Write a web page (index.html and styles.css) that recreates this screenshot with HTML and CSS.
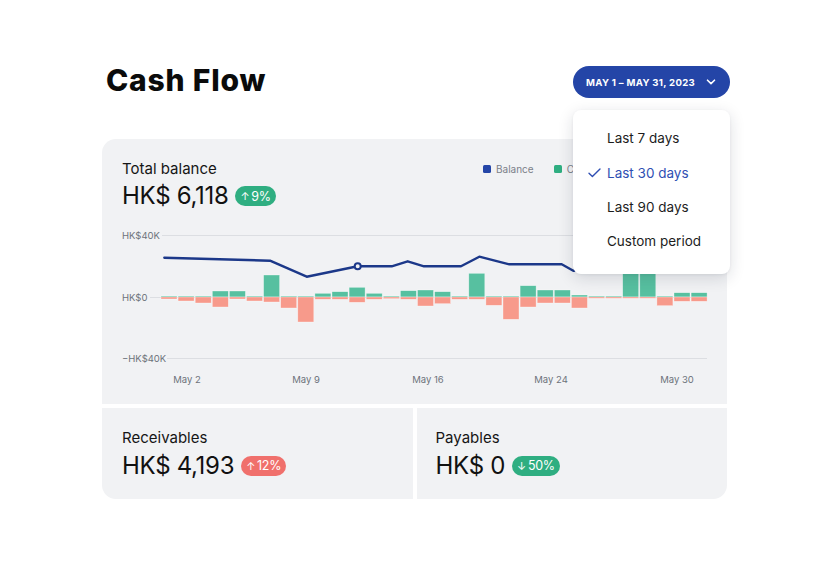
FILE: index.html
```html
<!DOCTYPE html>
<html lang="en">
<head>
<meta charset="utf-8">
<title>Cash Flow</title>
<link rel="stylesheet" href="styles.css">
</head>
<body>
<div class="page">
  <header class="header">
    <h1 class="title">Cash Flow</h1>
    <div class="picker">
      <button class="date-btn">
        <span>MAY 1 – MAY 31, 2023</span>
        <svg class="chev" width="10" height="6" viewBox="0 0 10 6"><path d="M1.5 1.2 5 4.6 8.5 1.2" fill="none" stroke="#fff" stroke-width="1.6" stroke-linecap="round" stroke-linejoin="round"/></svg>
      </button>
      <ul class="menu">
        <li class="item"><span class="check"></span><span>Last 7 days</span></li>
        <li class="item active"><span class="check"><svg width="13" height="10" viewBox="0 0 13 10"><path d="M1 5.2 4.4 8.6 12 1" fill="none" stroke="#2f4fb3" stroke-width="1.4" stroke-linecap="round" stroke-linejoin="round"/></svg></span><span>Last 30 days</span></li>
        <li class="item"><span class="check"></span><span>Last 90 days</span></li>
        <li class="item"><span class="check"></span><span>Custom period</span></li>
      </ul>
    </div>
  </header>

  <section class="card main">
    <div class="card-top">
      <div class="stat">
        <div class="label">Total balance</div>
        <div class="value-row"><span class="value">HK$ 6,118</span><span class="badge green"><span class="arr">↑</span>9%</span></div>
      </div>
      <div class="legend">
        <span class="leg"><i class="sw blue"></i>Balance</span>
        <span class="leg"><i class="sw teal"></i>Cash in</span>
      </div>
    </div>
    <svg class="chart" width="585" height="165" viewBox="0 0 585 165">
      <g class="axis">
        <text x="0" y="13.5">HK$40K</text>
        <text x="0" y="75.5">HK$0</text>
        <text x="0" y="136.5">−HK$40K</text>
      </g>
      <g class="grid">
        <line x1="40" y1="10.5" x2="585" y2="10.5"/>
        <line x1="28" y1="72.5" x2="585" y2="72.5"/>
        <line x1="45" y1="133.5" x2="585" y2="133.5"/>
      </g>
      <g class="in">
        <rect x="39" y="71" width="16" height="1"/>
        <rect x="56.1" y="71" width="16" height="1"/>
        <rect x="73.2" y="71" width="16" height="1"/>
        <rect x="90.3" y="66" width="16" height="6"/>
        <rect x="107.4" y="66" width="16" height="6"/>
        <rect x="124.5" y="71" width="16" height="1"/>
        <rect x="141.6" y="50" width="16" height="22"/>
        <rect x="158.7" y="71" width="16" height="1"/>
        <rect x="175.8" y="71" width="16" height="1"/>
        <rect x="192.9" y="68.3" width="16" height="3.7"/>
        <rect x="210" y="66.7" width="16" height="5.3"/>
        <rect x="227.1" y="62.3" width="16" height="9.7"/>
        <rect x="244.2" y="68.3" width="16" height="3.7"/>
        <rect x="261.3" y="71" width="16" height="1"/>
        <rect x="278.4" y="65.7" width="16" height="6.3"/>
        <rect x="295.5" y="65" width="16" height="7"/>
        <rect x="312.6" y="66.7" width="16" height="5.3"/>
        <rect x="329.7" y="71" width="16" height="1"/>
        <rect x="346.8" y="48.3" width="16" height="23.7"/>
        <rect x="363.9" y="71" width="16" height="1"/>
        <rect x="381" y="71" width="16" height="1"/>
        <rect x="398.1" y="60.7" width="16" height="11.3"/>
        <rect x="415.2" y="65" width="16" height="7"/>
        <rect x="432.3" y="65" width="16" height="7"/>
        <rect x="449.4" y="70" width="16" height="2"/>
        <rect x="466.5" y="71" width="16" height="1"/>
        <rect x="483.6" y="71" width="16" height="1"/>
        <rect x="500.7" y="44" width="16" height="28"/>
        <rect x="517.8" y="44" width="16" height="28"/>
        <rect x="534.9" y="71" width="16" height="1"/>
        <rect x="552" y="67.7" width="16" height="4.3"/>
        <rect x="569.1" y="67.7" width="16" height="4.3"/>
      </g>
      <g class="out">
        <rect x="39" y="72" width="16" height="2"/>
        <rect x="56.1" y="72" width="16" height="4"/>
        <rect x="73.2" y="72" width="16" height="6"/>
        <rect x="90.3" y="72" width="16" height="10"/>
        <rect x="107.4" y="72" width="16" height="2"/>
        <rect x="124.5" y="72" width="16" height="4"/>
        <rect x="141.6" y="72" width="16" height="5"/>
        <rect x="158.7" y="72" width="16" height="11"/>
        <rect x="175.8" y="72" width="16" height="25"/>
        <rect x="192.9" y="72" width="16" height="2.3"/>
        <rect x="210" y="72" width="16" height="2.3"/>
        <rect x="227.1" y="72" width="16" height="5.3"/>
        <rect x="244.2" y="72" width="16" height="2.3"/>
        <rect x="261.3" y="72" width="16" height="1.7"/>
        <rect x="278.4" y="72" width="16" height="2.3"/>
        <rect x="295.5" y="72" width="16" height="9"/>
        <rect x="312.6" y="72" width="16" height="6.7"/>
        <rect x="329.7" y="72" width="16" height="2.3"/>
        <rect x="346.8" y="72" width="16" height="2.3"/>
        <rect x="363.9" y="72" width="16" height="8.3"/>
        <rect x="381" y="72" width="16" height="22.3"/>
        <rect x="398.1" y="72" width="16" height="10"/>
        <rect x="415.2" y="72" width="16" height="6"/>
        <rect x="432.3" y="72" width="16" height="6"/>
        <rect x="449.4" y="72" width="16" height="11"/>
        <rect x="466.5" y="72" width="16" height="1.3"/>
        <rect x="483.6" y="72" width="16" height="1.3"/>
        <rect x="500.7" y="72" width="16" height="1.3"/>
        <rect x="517.8" y="72" width="16" height="1.3"/>
        <rect x="534.9" y="72" width="16" height="8.7"/>
        <rect x="552" y="72" width="16" height="4.3"/>
        <rect x="569.1" y="72" width="16" height="4.3"/>
      </g>
      <polyline class="balance" points="42.3,32.7 148,35.7 184.7,51.7 235.7,41.3 269.7,41.3 285.7,36.3 302,41.3 339,41.3 357.3,31.7 387.3,39.3 439.7,39.3 451.3,45.7 468,44 560,40 577,38"/>
      <circle class="dot" cx="235.7" cy="41.3" r="3"/>
      <g class="xaxis">
        <text x="65" y="157.5">May 2</text>
        <text x="184" y="157.5">May 9</text>
        <text x="306" y="157.5">May 16</text>
        <text x="429" y="157.5">May 24</text>
        <text x="555" y="157.5">May 30</text>
      </g>
    </svg>
  </section>

  <div class="bottom">
    <section class="card small left">
      <div class="label">Receivables</div>
      <div class="value-row"><span class="value">HK$ 4,193</span><span class="badge red"><span class="arr">↑</span>12%</span></div>
    </section>
    <section class="card small right">
      <div class="label">Payables</div>
      <div class="value-row"><span class="value">HK$ 0</span><span class="badge green"><span class="arr">↓</span>50%</span></div>
    </section>
  </div>
</div>
</body>
</html>
```

FILE: styles.css
```css
* { box-sizing: border-box; }
html, body { margin: 0; padding: 0; background: #fff; }
body {
  width: 832px;
  height: 564px;
  overflow: hidden;
  font-family: Inter, "Noto Sans", "Liberation Sans", sans-serif;
  color: #141414;
}
.page {
  width: 625px;
  margin-left: 102px;
  padding-top: 66px;
}
.header {
  display: flex;
  justify-content: space-between;
  align-items: flex-start;
  margin-right: -3px;
  height: 32px;
}
.title {
  margin: 0 0 0 4px;
  font-size: 30px;
  line-height: 28px;
  font-weight: 800;
  letter-spacing: 0.8px;
  color: #0b0b0b;
}
.picker { position: relative; }
.date-btn {
  display: flex;
  align-items: center;
  justify-content: space-between;
  height: 32px;
  width: 157px;
  padding: 0 14px 0 13px;
  border: 0;
  border-radius: 16px;
  background: #2445a7;
  color: #fff;
  font-family: Inter, "Liberation Sans", sans-serif;
  font-size: 9.6px;
  font-weight: 700;
  letter-spacing: 0.3px;
}
.chev { display: block; }
.menu {
  position: absolute;
  top: 44px;
  right: 0;
  width: 157px;
  margin: 0;
  padding: 11px 0 15px;
  list-style: none;
  background: #fff;
  border-radius: 8px;
  box-shadow: 0 4px 16px rgba(20, 30, 50, 0.14), 0 1px 3px rgba(20, 30, 50, 0.06);
  z-index: 5;
}
.item {
  display: flex;
  align-items: center;
  height: 34.4px;
  padding-left: 15px;
  font-size: 13.5px;
  color: #1d1d1d;
}
.item .check {
  width: 14px;
  margin-right: 5px;
  display: flex;
  align-items: center;
}
.item.active { color: #2f4fb3; }

.card { background: #f1f2f4; }
.main {
  margin-top: 41px;
  height: 265px;
  padding: 20px 20px 0;
  border-radius: 14px 14px 0 0;
}
.card-top {
  display: flex;
  justify-content: space-between;
  align-items: flex-start;
}
.label {
  font-size: 15px;
  line-height: 20px;
  color: #161616;
}
.value-row {
  display: flex;
  align-items: center;
  gap: 7px;
  margin-top: 3px;
}
.value {
  font-size: 24px;
  line-height: 28px;
  font-weight: 400;
  letter-spacing: -0.3px;
  color: #111;
}
.badge {
  display: inline-flex;
  align-items: center;
  height: 20px;
  padding: 0 5px 0 5px;
  border-radius: 10px;
  color: #fff;
  font-size: 12.5px;
  letter-spacing: -0.3px;
}
.badge .arr { font-size: 11px; margin-right: 2px; }
.badge.green { background: #2fae81; }
.badge.red { background: #f0706c; }

.legend {
  width: 224px;
  display: flex;
  gap: 20px;
  margin-top: 4px;
}
.leg {
  display: flex;
  align-items: center;
  gap: 5px;
  font-size: 10px;
  color: #7b8089;
}
.sw {
  width: 8px;
  height: 8px;
  border-radius: 1.5px;
}
.sw.blue { background: #2445a7; }
.sw.teal { background: #2fae81; }

.chart {
  display: block;
  margin-top: 15px;
  overflow: visible;
}
.chart text {
  font-family: Inter, "Liberation Sans", sans-serif;
  font-size: 9.5px;
  fill: #6d727b;
}
.xaxis text { text-anchor: middle; }
.grid line { stroke: #dcdee2; stroke-width: 1; }
.in rect { fill: #57c0a0; stroke: rgba(255,255,255,0.55); stroke-width: 0.6; }
.out rect { fill: #f79a8b; stroke: rgba(255,255,255,0.55); stroke-width: 0.6; }
.balance {
  fill: none;
  stroke: #1c3889;
  stroke-width: 2.4;
  stroke-linejoin: round;
  stroke-linecap: round;
}
.dot { fill: #f1f2f4; stroke: #1c3889; stroke-width: 2; }

.bottom {
  display: grid;
  grid-template-columns: 1fr 1fr;
  gap: 4px;
  margin-top: 4px;
}
.small {
  height: 91px;
  padding: 19.5px 20px 0;
}
.small .value-row { margin-top: 4px; }
.small.left { border-radius: 0 0 0 14px; }
.small.right { border-radius: 0 0 14px 0; padding-left: 19px; }
```
